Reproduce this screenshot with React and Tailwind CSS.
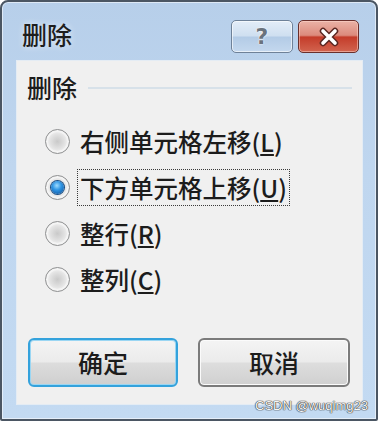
export default function App() {
  const rows = [
    { key: 'L', pre: '右侧单元格左移(', post: ')', checked: false, focus: false },
    { key: 'U', pre: '下方单元格上移(', post: ')', checked: true, focus: true },
    { key: 'R', pre: '整行(', post: ')', checked: false, focus: false },
    { key: 'C', pre: '整列(', post: ')', checked: false, focus: false },
  ];
  return (
    <div className="relative h-[423px] w-[383px] bg-white font-['Noto_Sans_CJK_SC',sans-serif] font-medium text-[#1c1c1c]">
      <div className="flex h-[421px] w-[378px] flex-col rounded-t-[8px] rounded-b-[2px] border-2 border-[#4b5663] bg-[linear-gradient(180deg,#b7cfea_0%,#bfd6ef_40%,#c3daf2_100%)] pl-[14px] pr-[13px] pb-[13px] shadow-[inset_0_0_0_1px_rgba(255,255,255,0.55)]">
        {/* title bar */}
        <div className="flex h-[58px] shrink-0 items-start pt-[18px]">
          <div className="ml-[6px] mt-[2px] text-[25px] leading-[25px] text-[#1e1e1e] [text-shadow:0_0_6px_rgba(255,255,255,0.7)]">删除</div>
          <div className="ml-auto mr-[4px] flex gap-[5px]">
            <div className="flex h-[33px] w-[62px] items-center justify-center rounded-[5px] border border-[#6e8198] bg-[linear-gradient(180deg,#e3edf8_0%,#cfdff0_48%,#b3cbe6_52%,#c4d8ee_100%)] shadow-[inset_0_0_0_1px_rgba(255,255,255,0.6)]">
              <span className="font-['DejaVu_Sans',sans-serif] text-[22px] font-bold leading-none text-[#6a737d] [text-shadow:0_0_2px_#ffffff,0_0_1px_#ffffff]">?</span>
            </div>
            <div className="flex h-[33px] w-[61px] items-center justify-center rounded-[5px] border border-[#6a2f2b] bg-[linear-gradient(180deg,#eab2a6_0%,#dc8a7c_46%,#c43c2a_52%,#d2644f_100%)] shadow-[inset_0_0_0_1px_rgba(255,220,210,0.5)]">
              <svg width="20" height="20" viewBox="0 0 20 20">
                <path d="M4 4 L16 16 M16 4 L4 16" stroke="#5a2621" strokeWidth="6.5" strokeLinecap="round" />
                <path d="M4 4 L16 16 M16 4 L4 16" stroke="#ffffff" strokeWidth="3.6" strokeLinecap="round" />
              </svg>
            </div>
          </div>
        </div>
        {/* client area */}
        <div className="flex h-[345px] shrink-0 flex-col border border-[#e4ecf4] bg-[#f0f0f0] pl-[10px] pr-[10px] pt-[14px]">
          <div className="flex h-[25px] items-center">
            <span className="text-[25px] leading-[25px]">删除</span>
            <div className="ml-[11px] h-[2px] flex-1 bg-[#d7e1e9]" />
          </div>
          <div className="mt-[18px] flex flex-col pl-[18px]">
            {rows.map((r) => (
              <div key={r.key} className="flex h-[46px] items-center">
                <span className="flex h-[25px] w-[25px] shrink-0 items-center justify-center rounded-full border border-[#8e8f90] bg-[radial-gradient(circle_at_50%_50%,#c9c9c9_0%,#e2e2e2_45%,#f8f8f8_75%,#ececec_100%)] shadow-[inset_0_0_0_2px_#f4f4f4]">
                  {r.checked && (
                    <span className="h-[13px] w-[13px] rounded-full bg-[radial-gradient(circle_at_45%_35%,#9fdcff_0%,#2f95e4_40%,#0b4c95_100%)] shadow-[0_0_0_1px_#1a4f86]" />
                  )}
                </span>
                <span
                  className={
                    r.focus
                      ? 'ml-[7px] flex h-[37px] items-center border border-dotted border-[#3a3a3a] px-[2px] text-[24.5px] leading-[25px]'
                      : 'ml-[7px] flex h-[37px] items-center border border-transparent px-[2px] text-[24.5px] leading-[25px]'
                  }
                >
                  {r.pre}
                  <u className="underline-offset-2">{r.key}</u>
                  {r.post}
                </span>
              </div>
            ))}
          </div>
          <div className="mt-[36px] flex gap-[20px] pl-[1px]">
            <div className="flex h-[49px] w-[150px] items-center justify-center rounded-[6px] border-[2px] border-[#34a2dc] bg-[linear-gradient(180deg,#f4f4f4_0%,#ebebeb_48%,#dcdcdc_52%,#cfcfcf_100%)] text-[25px] leading-[25px] shadow-[inset_0_0_0_1px_#9ad6f3]">
              确定
            </div>
            <div className="flex h-[49px] w-[152px] items-center justify-center rounded-[6px] border-[2px] border-[#7b7b7b] bg-[linear-gradient(180deg,#f4f4f4_0%,#ebebeb_48%,#dddddd_52%,#d0d0d0_100%)] text-[25px] leading-[25px] shadow-[inset_0_0_0_1px_#fbfbfb]">
              取消
            </div>
          </div>
        </div>
      </div>
      <div className="absolute left-[255px] top-[398px] font-['Liberation_Sans',sans-serif] text-[13px] font-normal leading-[15px] text-[#f6f6f6] [text-shadow:0_0_1px_#333,0_0_1px_#333,0_0_1px_#333]">
        CSDN @wuqimg23
      </div>
    </div>
  );
}
